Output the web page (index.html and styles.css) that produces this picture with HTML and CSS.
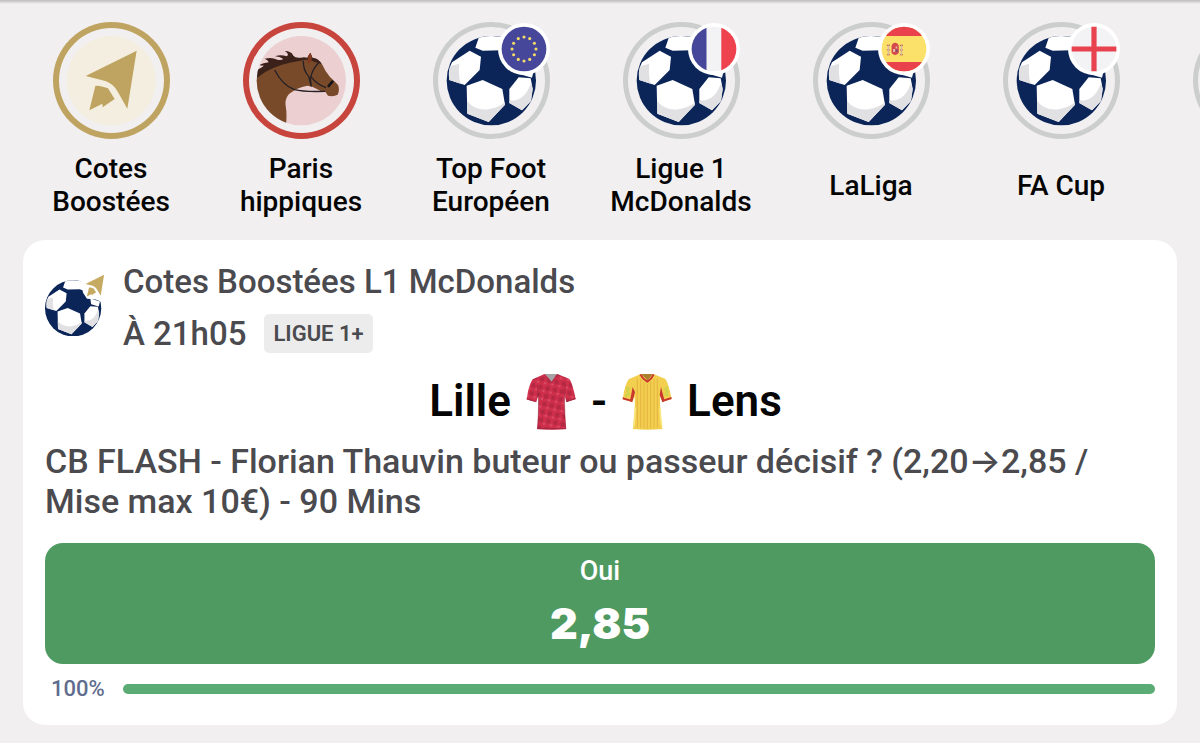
FILE: index.html
```html
<!DOCTYPE html>
<html lang="fr">

<head>
    <meta charset="UTF-8">
    <meta name="viewport" content="width=device-width, initial-scale=1.0">
    <title>Cotes Boostées</title>
    <link rel="stylesheet" href="styles.css">
</head>

<body>
    <!-- shared icon shapes -->
    <svg class="defs" aria-hidden="true">
        <defs>
            <clipPath id="disc">
                <circle cx="184" cy="197" r="134" />
            </clipPath>
            <clipPath id="flag">
                <circle cx="50" cy="50" r="43" />
            </clipPath>
            <g id="ball">
                <circle cx="184" cy="197" r="134" fill="#0b2559" />
                <g clip-path="url(#disc)">
                    <path d="M149 60L136 98L158 107L215 106L260 120L290 70Z" fill="#fff" />
                    <path d="M66 142L119 107L153 125L149 165L104 210L58 195Q54 165 66 142Z" fill="#fff" />
                    <path d="M60 154L88 146Q84 180 92 206L58 195Q54 172 60 154Z" fill="#e1e0e3" />
                    <path d="M110 212L158 195L217 222L225 269L176 321L112 296Z" fill="#fff" />
                    <path d="M111 258Q136 288 175 283Q204 279 225 262L225 269L176 321L112 296Z" fill="#e1e0e3" />
                    <path d="M238 222L266 187L302 190L308 222L303 258L276 286L238 264Z" fill="#fff" />
                    <path d="M303 205L308 222L303 258L276 286L238 264L240 256Q282 262 303 205Z" fill="#e1e0e3" />
                    <path d="M266 150L312 165L306 188L270 178Z" fill="#fff" />
                </g>
            </g>
            <g id="boost">
                <path d="M260 107L107 183L166 198Q190 207 202 228L232 281Z" />
                <path d="M136 213Q146 210 174 220L194 252L158 277L157 266L118 286Z" />
            </g>
        </defs>
    </svg>

    <nav class="shortcuts">
        <a class="shortcut" href="#boostees">
            <span class="ring ring-gold">
                <svg class="ring-icon" viewBox="9 21 351 351">
                    <circle cx="184" cy="197" r="134" fill="#f4eee0" />
                    <use href="#boost" fill="#bfa461" />
                </svg>
            </span>
            <span class="label">Cotes<br>Boostées</span>
        </a>
        <a class="shortcut" href="#hippiques">
            <span class="ring ring-red">
                <svg class="ring-icon" viewBox="9 21 351 351">
                    <circle cx="184" cy="197" r="134" fill="#ebcfd1" />
                    <g clip-path="url(#disc)">
                        <path d="M40 340V190Q80 160 120 147Q170 128 202 130L211 113L218 130Q236 134 247 149Q254 166 270 186Q285 200 294 210Q300 224 293 239Q280 246 264 242L256 230Q240 229 229 221Q214 212 202 212Q170 218 147 237Q134 252 137 272Q142 300 137 340Z" fill="#784a2a" />
                        <path d="M50 189V165Q62 160 72 152Q62 152 58 150Q70 144 86 142Q84 134 74 131Q96 126 112 134Q124 136 130 132Q120 124 105 124Q122 118 140 124Q150 118 134 108Q154 108 160 122Q166 130 182 128Q192 126 202 128L211 113L217 128Q236 128 245 148Q232 142 224 141Q206 130 182 137Q120 145 76 171Z" fill="#3a211a" />
                        <path d="M202 146L204 124L211 113L216 127L213 140Z" fill="#82391f" />
                        <path d="M104 165Q128 212 164 224Q190 231 256 229M190 137Q189 165 206 184L214 215M236 143Q218 160 211 190L214 215M212 184Q230 208 258 218" fill="none" stroke="#252024" stroke-width="4" />
                        <path d="M266 213L277 200" stroke="#15131a" stroke-width="8" stroke-linecap="round" />
                    </g>
                </svg>
            </span>
            <span class="label">Paris<br>hippiques</span>
        </a>
        <a class="shortcut" href="#europe">
            <span class="ring">
                <svg class="ring-icon" viewBox="9 21 351 351"><use href="#ball" /></svg>
                <svg class="flag" viewBox="0 0 100 100">
                    <circle cx="50" cy="50" r="50" fill="#fff" />
                    <circle cx="50" cy="50" r="43" fill="#46479a" />
                    <g fill="#f4dc6b">
                        <circle cx="50" cy="27" r="3" />
                        <circle cx="61" cy="30" r="3" />
                        <circle cx="70" cy="39" r="3" />
                        <circle cx="73" cy="50" r="3" />
                        <circle cx="70" cy="61" r="3" />
                        <circle cx="61" cy="70" r="3" />
                        <circle cx="50" cy="73" r="3" />
                        <circle cx="39" cy="70" r="3" />
                        <circle cx="30" cy="61" r="3" />
                        <circle cx="27" cy="50" r="3" />
                        <circle cx="30" cy="39" r="3" />
                        <circle cx="39" cy="30" r="3" />
                    </g>
                </svg>
            </span>
            <span class="label">Top Foot<br>Européen</span>
        </a>
        <a class="shortcut" href="#ligue1">
            <span class="ring">
                <svg class="ring-icon" viewBox="9 21 351 351"><use href="#ball" /></svg>
                <svg class="flag" viewBox="0 0 100 100">
                    <circle cx="50" cy="50" r="50" fill="#fff" />
                    <g clip-path="url(#flag)">
                        <path d="M0 0H36V100H0Z" fill="#46479a" />
                        <path d="M36 0H64V100H36Z" fill="#f3f3f5" />
                        <path d="M64 0H100V100H64Z" fill="#ee424e" />
                    </g>
                </svg>
            </span>
            <span class="label">Ligue 1<br>McDonalds</span>
        </a>
        <a class="shortcut" href="#laliga">
            <span class="ring">
                <svg class="ring-icon" viewBox="9 21 351 351"><use href="#ball" /></svg>
                <svg class="flag" viewBox="0 0 100 100">
                    <circle cx="50" cy="50" r="50" fill="#fff" />
                    <g clip-path="url(#flag)">
                        <path d="M0 0H100V100H0Z" fill="#fbe06a" />
                        <path d="M0 0H100V25H0ZM0 75H100V100H0Z" fill="#ea424d" />
                        <path d="M17 43H23M17 52H23M17 61H23M42 43H48M42 52H48M42 61H48" stroke="#c0554c" stroke-width="2" />
                        <path d="M20 43V61M45 43V61" stroke="#d5b8a0" stroke-width="3" />
                        <path d="M26 44Q28 38 33 38Q38 38 40 44V57Q33 66 26 57Z" fill="#d5494b" />
                        <path d="M29 50H33V56H29ZM34 45H37V49H34Z" fill="#e8b9ad" />
                        <path d="M34 51H38V56H34Z" fill="#7c5074" />
                    </g>
                </svg>
            </span>
            <span class="label">LaLiga</span>
        </a>
        <a class="shortcut" href="#facup">
            <span class="ring">
                <svg class="ring-icon" viewBox="9 21 351 351"><use href="#ball" /></svg>
                <svg class="flag" viewBox="0 0 100 100">
                    <circle cx="50" cy="50" r="50" fill="#fff" />
                    <circle cx="50" cy="50" r="43" fill="#f3f3f5" />
                    <path d="M45 7H55V93H45ZM7 45H93V55H7Z" fill="#e8424e" />
                </svg>
            </span>
            <span class="label">FA Cup</span>
        </a>
        <a class="shortcut" href="#suite">
            <span class="ring"></span>
        </a>
    </nav>

    <main class="card">
        <header class="card-header">
            <svg class="card-icon" viewBox="72 116 183 186">
                <use href="#ball" transform="translate(40 93) scale(0.64)" />
                <path d="M180 134L262 108V190L246 200L226 192L200 190L188 172Z" fill="#fff" />
                <use href="#boost" fill="#c6aa61" transform="translate(156 77) scale(0.37)" />
            </svg>
            <div class="card-heading">
                <h1 class="card-title">Cotes Boostées L1 McDonalds</h1>
                <div class="card-time">
                    <span>À 21h05</span>
                    <span class="channel">LIGUE 1+</span>
                </div>
            </div>
        </header>

        <h2 class="match">
            <span>Lille</span>
            <svg class="shirt" viewBox="0 0 150 171">
                <defs>
                    <pattern id="lille" width="22" height="24" patternUnits="userSpaceOnUse" patternTransform="rotate(12)">
                        <path d="M0 0H22V24H0Z" fill="#cf2f4b" />
                        <path d="M0 4L11 0L15 12L4 16Z" fill="#b32842" />
                        <path d="M13 18L21 14V21Z" fill="#e05c73" />
                    </pattern>
                </defs>
                <path d="M54 4L96 4L129 17Q138 24 149 78L121 87L116 68Q114 110 121 168Q76 173 33 168Q39 110 37 68L31 87L2 79Q8 35 20 19Z" fill="url(#lille)" />
                <path d="M57 3H92L77 26Z" fill="#a5a3a5" />
                <path d="M54 4L76 29L96 4" fill="none" stroke="#a82d43" stroke-width="3" />
                <path d="M34 35L38 75L36 164M118 35L115 75L118 164" fill="none" stroke="#8e2039" stroke-width="3" opacity=".5" />
                <path d="M2 78L29 86M121 86L149 77M34 167H120" stroke="#a72540" stroke-width="3" />
            </svg>
            <span>-</span>
            <svg class="shirt" viewBox="0 0 150 171">
                <path d="M54 4L96 4L129 17Q138 24 149 78L121 87L114 70Q113 110 121 168Q76 173 33 168Q40 110 38 70L31 87L2 79Q8 35 20 19Z" fill="#f3cf4f" />
                <path d="M46 18V164M56 18V166M66 26V167M76 34V167M86 26V167M96 18V166M106 18V164" stroke="#dda63c" stroke-width="2" />
                <path d="M32 42L39 58L31 87L24 84ZM117 42L113 65L121 87L128 84Z" fill="#c7372e" />
                <path d="M2 73L30 81V87L2 79ZM120 81L148 72L149 78L121 87Z" fill="#c7372e" />
                <path d="M12 43L21 47L15 55L20 63L10 70M137 42L129 49L137 56L130 64L140 68" fill="none" stroke="#cbd34b" stroke-width="6" />
                <path d="M57 3H92L77 22Z" fill="#a9802f" />
                <path d="M55 4Q62 18 76 26Q89 18 95 4" fill="none" stroke="#cc372f" stroke-width="6" />
                <path d="M40 104Q38 135 35 160M114 104Q115 135 119 160" fill="none" stroke="#fae781" stroke-width="5" />
            </svg>
            <span>Lens</span>
        </h2>

        <p class="bet-name">CB FLASH - Florian Thauvin buteur ou passeur décisif ? (2,20→2,85 / Mise max 10€) - 90 Mins</p>

        <button class="odds" type="button">
            <span class="odds-name">Oui</span>
            <span class="odds-value">2,85</span>
        </button>

        <div class="share">
            <label class="share-label" for="share-yes">100%</label>
            <progress class="share-bar" id="share-yes" value="100" max="100"></progress>
        </div>
    </main>
</body>

</html>
```
FILE: styles.css
```css
* {
    box-sizing: border-box;
}

body {
    font-family: Roboto, Inter, Arial, sans-serif;
    font-weight: 500;
    margin: 0;
    background: #f1eff0;
    color: #050505;
    overflow-x: hidden;
}

.defs {
    position: absolute;
    width: 0;
    height: 0;
}

.shortcuts {
    display: flex;
    padding: 22px 0 0 16px;
    overflow: hidden;
    background: linear-gradient(#bdbbbc, #f1eff0 4px);
}

.shortcut {
    flex: 0 0 190px;
    display: flex;
    flex-direction: column;
    align-items: center;
    gap: 13px;
    color: inherit;
    text-decoration: none;
}

.ring {
    position: relative;
    width: 117px;
    height: 117px;
    border-radius: 50%;
    box-shadow: inset 0 0 0 5px #cbcecd;
}

.ring-gold {
    box-shadow: inset 0 0 0 6px #bfa461;
}

.ring-red {
    box-shadow: inset 0 0 0 6px #c8453e;
}

.ring-icon {
    display: block;
    width: 100%;
    height: 100%;
}

.flag {
    position: absolute;
    top: 1px;
    right: 0;
    width: 52px;
    height: 52px;
}

.label {
    display: flex;
    align-items: center;
    min-height: 66px;
    font-size: 28px;
    line-height: 33px;
    text-align: center;
}

.card {
    margin: 22px 23px 18px;
    padding: 16px 22px 21px;
    background: #fff;
    border-radius: 22px;
}

.card-header {
    display: flex;
    gap: 18px;
    color: #4a4a4f;
}

.card-icon {
    width: 60px;
    height: 62px;
    margin-top: 18px;
}

.card-title {
    margin: 0;
    font-size: 33px;
    font-weight: 500;
    line-height: 51px;
}

.card-time {
    display: flex;
    align-items: center;
    gap: 18px;
    height: 52px;
    font-size: 33px;
}

.channel {
    padding: 0 9px;
    background: #ececec;
    border-radius: 5px;
    font-size: 22px;
    font-weight: 600;
    line-height: 39px;
}

.match {
    display: flex;
    justify-content: center;
    align-items: center;
    gap: 15px;
    margin: 12px 0 10px;
    padding-left: 11px;
    font-size: 44px;
    font-weight: 600;
    line-height: 60px;
}

.shirt {
    width: 50px;
    height: 57px;
}

.bet-name {
    margin: 0 0 22px;
    color: #4a4a4f;
    font-size: 34px;
    line-height: 40px;
}

.odds {
    display: flex;
    flex-direction: column;
    align-items: center;
    width: 100%;
    padding: 10px 0 7px;
    border: none;
    border-radius: 18px;
    background: #4f9a60;
    color: #fff;
    font-family: inherit;
    cursor: pointer;
}

.odds-name {
    font-size: 27px;
    font-weight: 500;
    line-height: 36px;
}

.odds-value {
    font-family: Inter, sans-serif;
    font-size: 43px;
    font-weight: 900;
    line-height: 68px;
}

.share {
    display: flex;
    align-items: center;
    gap: 18px;
    margin-top: 10px;
    padding-left: 6px;
}

.share-label {
    color: #5f6d8e;
    font-size: 22px;
    line-height: 30px;
}

.share-bar {
    flex: 1;
    height: 10px;
    appearance: none;
    border: none;
    border-radius: 5px;
    background: #e3e3e3;
    overflow: hidden;
}

.share-bar::-webkit-progress-bar {
    background: #e3e3e3;
}

.share-bar::-webkit-progress-value {
    background: #5aab74;
}
```
